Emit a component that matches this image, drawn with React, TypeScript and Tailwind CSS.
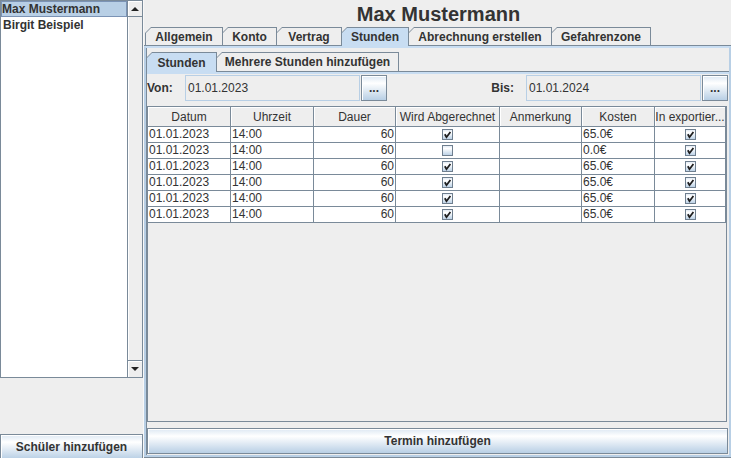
import React from "react";

const GRAD = "bg-[linear-gradient(to_bottom,#dde8f3_0%,#ffffff_30%,#b8cfe5_100%)]";

function CheckBox({ checked }: { checked: boolean }) {
  return (
    <svg width="11" height="11" viewBox="0 0 11 11" className="block">
      <defs>
        <linearGradient id="cbg" x1="0" y1="0" x2="0" y2="1">
          <stop offset="0" stopColor="#dde8f3" />
          <stop offset="0.3" stopColor="#ffffff" />
          <stop offset="1" stopColor="#b8cfe5" />
        </linearGradient>
      </defs>
      <rect x="0.5" y="0.5" width="10" height="10" fill="url(#cbg)" stroke="#6f7f8f" />
      {checked && (
        <path d="M2.8 5.2 L4.5 8.2 L8.4 3" fill="none" stroke="#1e1e1e" strokeWidth="1.8" />
      )}
    </svg>
  );
}

function Tab({ label, w, h, selected }: { label: string; w: string; h: string; selected?: boolean }) {
  return (
    <div className={`${w} shrink-0 -mr-px ${selected ? "relative z-10 -mb-px" : ""}`}>
      <div
        className={`${h} bg-[#7a8a99] pt-px px-px [clip-path:polygon(6px_0,100%_0,100%_100%,0_100%,0_6px)]`}
      >
        <div
          className={`h-full flex items-center justify-center font-bold whitespace-nowrap [clip-path:polygon(5px_0,100%_0,100%_100%,0_100%,0_5px)] ${
            selected ? "bg-[#c8ddf2]" : "bg-[#eeeeee]"
          }`}
        >
          {label}
        </div>
      </div>
    </div>
  );
}

const COLS = ["w-[83px]", "w-[83px]", "w-[82px]", "w-[104px]", "w-[82px]", "w-[73px]", "w-[71px]"];
const HEADERS = ["Datum", "Uhrzeit", "Dauer", "Wird Abgerechnet", "Anmerkung", "Kosten", "In exportier..."];

const ROWS = [
  { billed: true, cost: "65.0€" },
  { billed: false, cost: "0.0€" },
  { billed: true, cost: "65.0€" },
  { billed: true, cost: "65.0€" },
  { billed: true, cost: "65.0€" },
  { billed: true, cost: "65.0€" },
];

function Arrow({ down }: { down?: boolean }) {
  return (
    <svg width="8" height="4" viewBox="0 0 8 4" className="block">
      {down ? <path d="M0 0 H8 L4 4 Z" fill="#222" /> : <path d="M0 4 H8 L4 0 Z" fill="#222" />}
    </svg>
  );
}

export default function App() {
  return (
    <div className="w-[731px] h-[458px] bg-[#eeeeee] flex overflow-hidden font-['Liberation_Sans',Arial,sans-serif] text-[12px] text-[#333333]">
      {/* Left pane */}
      <div className="w-[143px] shrink-0 flex flex-col">
        <div className="h-[378px] shrink-0 border border-[#7a8a99] flex">
          <div className="flex-1 bg-white">
            <div className="h-[16px] leading-[14px] border border-[#7b93b5] bg-[#b8cfe5] font-bold whitespace-nowrap">
              Max Mustermann
            </div>
            <div className="h-[16px] leading-[14px] border border-transparent pl-px font-bold whitespace-nowrap">
              Birgit Beispiel
            </div>
          </div>
          <div className="w-[15px] border-l border-[#7a8a99] bg-[#eeeeee] flex flex-col shadow-[inset_1px_0_0_#ffffff]">
            <div className="h-[16px] border-b border-[#7a8a99] flex items-center justify-center shadow-[inset_1px_1px_0_#ffffff]">
              <Arrow />
            </div>
            <div className="flex-1" />
            <div className="h-[17px] border-t border-[#7a8a99] flex items-center justify-center shadow-[inset_1px_1px_0_#ffffff]">
              <Arrow down />
            </div>
          </div>
        </div>
        <div className="h-[56px] shrink-0" />
        <div
          className={`h-[26px] shrink-0 border border-[#7a8a99] ${GRAD} flex items-center justify-center font-bold shadow-[inset_1px_1px_0_#ffffff]`}
        >
          Schüler hinzufügen
        </div>
      </div>

      {/* Right pane */}
      <div className="w-[588px] shrink-0 flex flex-col border-l border-[#f8f8f8]">
        <div className="h-[27px] shrink-0 pl-[2px] flex items-center justify-center text-[20px] font-bold leading-none">
          Max Mustermann
        </div>
        <div className="h-[18px] shrink-0 flex items-end pl-px">
          <Tab label="Allgemein" w="w-[78px]" h="h-[18px]" />
          <Tab label="Konto" w="w-[55px]" h="h-[18px]" />
          <Tab label="Vertrag" w="w-[66px]" h="h-[18px]" />
          <Tab label="Stunden" w="w-[68px]" h="h-[19px]" selected />
          <Tab label="Abrechnung erstellen" w="w-[144px]" h="h-[18px]" />
          <Tab label="Gefahrenzone" w="w-[100px]" h="h-[18px]" />
        </div>
        <div className="flex-1 flex flex-col border-t border-b border-[#7a8a99] min-h-0">
          <div className="flex-1 flex flex-col border-t-2 border-t-[#c8ddf2] border-x-2 border-x-[#b8cfe5] border-b-2 border-b-[#b8cfe5] min-h-0">
            <div className="flex-1 flex flex-col border-l border-[#7a8a99] pt-[4px] pb-px">
              <div className="h-[19px] shrink-0 flex items-end -ml-px">
                <Tab label="Stunden" w="w-[71px]" h="h-[20px]" selected />
                <Tab label="Mehrere Stunden hinzufügen" w="w-[183px]" h="h-[19px]" />
              </div>
              <div className="flex-1 flex flex-col border-t border-[#7a8a99]">
                <div className="flex-1 flex flex-col border-t-2 border-[#c8ddf2] pt-px">
                  {/* Von / Bis row */}
                  <div className="h-[26px] shrink-0 flex">
                    <div className="w-[38px] flex items-center font-bold">Von:</div>
                    <div className="w-[175px] border border-[#b8cfe5] bg-[#eeeeee] flex items-center pl-[2px]">
                      01.01.2023
                    </div>
                    <div
                      className={`w-[26px] ml-px border border-[#7a8a99] ${GRAD} flex items-center justify-center font-bold shadow-[inset_1px_1px_0_#ffffff]`}
                    >
                      ...
                    </div>
                    <div className="flex-1 flex items-center justify-end pr-[12px] font-bold">Bis:</div>
                    <div className="w-[175px] border border-[#b8cfe5] bg-[#eeeeee] flex items-center pl-[2px]">
                      01.01.2024
                    </div>
                    <div
                      className={`w-[26px] ml-px mr-px border border-[#7a8a99] ${GRAD} flex items-center justify-center font-bold shadow-[inset_1px_1px_0_#ffffff]`}
                    >
                      ...
                    </div>
                  </div>

                  {/* Table */}
                  <div className="h-[316px] shrink-0 mt-[5px] mr-[2px] border border-[#7a8a99] bg-[#eeeeee] overflow-hidden">
                    <div className="flex h-[20px]">
                      {HEADERS.map((h, i) => (
                        <div
                          key={h}
                          className={`${COLS[i]} shrink-0 border-r border-b border-[#7a8a99] bg-[#eeeeee] shadow-[inset_1px_1px_0_#ffffff] flex items-center justify-center whitespace-nowrap overflow-hidden`}
                        >
                          {h}
                        </div>
                      ))}
                    </div>
                    {ROWS.map((r, ri) => (
                      <div key={ri} className="flex h-[16px] bg-white w-[578px]">
                        <div className={`${COLS[0]} shrink-0 border-r border-b border-[#7a8a99] leading-[15px] pl-px`}>
                          01.01.2023
                        </div>
                        <div className={`${COLS[1]} shrink-0 border-r border-b border-[#7a8a99] leading-[15px] pl-px`}>
                          14:00
                        </div>
                        <div
                          className={`${COLS[2]} shrink-0 border-r border-b border-[#7a8a99] leading-[15px] pr-px text-right`}
                        >
                          60
                        </div>
                        <div
                          className={`${COLS[3]} shrink-0 border-r border-b border-[#7a8a99] flex items-center justify-center`}
                        >
                          <CheckBox checked={r.billed} />
                        </div>
                        <div className={`${COLS[4]} shrink-0 border-r border-b border-[#7a8a99]`} />
                        <div className={`${COLS[5]} shrink-0 border-r border-b border-[#7a8a99] leading-[15px] pl-px`}>
                          {r.cost}
                        </div>
                        <div
                          className={`${COLS[6]} shrink-0 border-r border-b border-[#7a8a99] flex items-center justify-center`}
                        >
                          <CheckBox checked={true} />
                        </div>
                      </div>
                    ))}
                  </div>

                  {/* Bottom button */}
                  <div
                    className={`h-[26px] shrink-0 mt-[6px] mr-px border border-[#7a8a99] ${GRAD} flex items-center justify-center font-bold shadow-[inset_1px_1px_0_#ffffff]`}
                  >
                    Termin hinzufügen
                  </div>
                </div>
              </div>
            </div>
          </div>
        </div>
      </div>
    </div>
  );
}
